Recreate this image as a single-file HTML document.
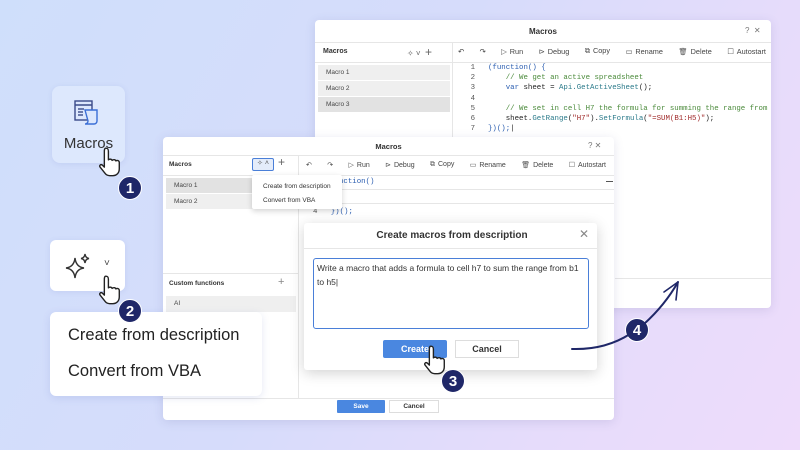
<!DOCTYPE html>
<html><head><meta charset="utf-8"><style>
*{box-sizing:border-box;margin:0;padding:0}
body{width:800px;height:450px;overflow:hidden;position:relative;font-family:"Liberation Sans",sans-serif;background:linear-gradient(120deg,#cfdffb 0%,#d6dcfb 45%,#e6dcfb 75%,#eedcfb 100%);color:#333}
.abs{position:absolute}
.win{position:absolute;background:#fff;border-radius:4px;box-shadow:0 2px 10px rgba(80,80,140,.15);overflow:hidden}
.t{font-size:8px;color:#333}
.b{font-weight:bold}
.mono{font-family:"Liberation Mono",monospace;font-size:7.4px}
.row{position:absolute;background:#ebebeb;font-size:6.5px;color:#444;padding-left:8px}
.badge{position:absolute;width:24px;height:24px;border-radius:50%;background:#1f2768;color:#fff;font-weight:bold;font-size:15px;text-align:center;line-height:24px;border:1.5px solid #fff}
.hl{position:absolute;height:1px;background:#e6e6e6}
.vl{position:absolute;width:1px;background:#e6e6e6}
.kw{color:#2a5db0}.cm{color:#4a8a3a}.fn{color:#2a7a8a}.st{color:#a02a2a}
.tb{position:absolute;display:flex;justify-content:space-between;align-items:center;color:#444;white-space:nowrap}
.tb span .i{color:#555;margin-right:3px}
</style></head><body>

<!-- back window -->
<div class="win" style="left:315px;top:20px;width:456px;height:288px">
 <div class="abs t b" style="left:0;width:456px;top:7px;text-align:center">Macros</div>
 <div class="abs t" style="left:430px;top:6px;color:#777">?&nbsp;&nbsp;✕</div>
 <div class="hl" style="left:0;top:22px;width:456px"></div>
 <div class="abs t b" style="left:8px;top:28px;font-size:7px">Macros</div>
 <div class="abs t" style="left:92px;top:25px;color:#666">✧ ˅&nbsp;&nbsp;<span style="font-size:12px">+</span></div>
 <div class="vl" style="left:137px;top:22px;height:266px"></div>
 <div class="tb" style="left:143px;top:24px;width:308px;height:14px;font-size:7.3px"><span>↶</span><span>↷</span><span><span class="i">▷</span>Run</span><span><span class="i">⊳</span>Debug</span><span><span class="i">⧉</span>Copy</span><span><span class="i">▭</span>Rename</span><span><span class="i">🗑</span>Delete</span><span><span class="i">☐</span>Autostart</span></div>
 <div class="hl" style="left:0;top:42px;width:456px"></div>
 <div class="row" style="left:3px;top:45px;width:132px;height:15px;line-height:15px;background:#efefef">Macro 1</div>
 <div class="row" style="left:3px;top:61px;width:132px;height:15px;line-height:15px;background:#efefef">Macro 2</div>
 <div class="row" style="left:3px;top:77px;width:132px;height:15px;line-height:15px;background:#e2e2e2">Macro 3</div>
 <div class="abs mono" style="left:150px;top:43px;line-height:10.2px;color:#555;text-align:right;width:10px">1<br>2<br>3<br>4<br>5<br>6<br>7</div>
 <div class="abs mono" style="left:173px;top:43px;line-height:10.2px;white-space:pre;color:#222"><span class="kw">(function() {</span>
    <span class="cm">// We get an active spreadsheet</span>
    <span class="kw">var</span> sheet = <span class="fn">Api.GetActiveSheet</span>();

    <span class="cm">// We set in cell H7 the formula for summing the range from B1 to</span>
    sheet.<span class="fn">GetRange</span>(<span class="st">"H7"</span>).<span class="fn">SetFormula</span>(<span class="st">"=SUM(B1:H5)"</span>);
<span class="kw">})();</span>|</div>
 <div class="hl" style="left:300px;top:258px;width:156px"></div>
</div>

<!-- macros tile -->
<div class="abs" style="left:52px;top:86px;width:73px;height:77px;background:#dde8fd;border-radius:8px;box-shadow:0 1px 6px rgba(80,100,180,.12)"></div>
<svg class="abs" style="left:73px;top:98px" width="28" height="28" viewBox="0 0 28 28" fill="none" stroke="#3a4a8a" stroke-width="1.4"><rect x="2" y="3" width="17" height="19"/><line x1="2" y1="7" x2="19" y2="7"/><line x1="5" y1="11" x2="11" y2="11"/><line x1="5" y1="14" x2="10" y2="14"/><line x1="5" y1="17" x2="10" y2="17"/><path d="M12 12h12v11a3 3 0 0 1-3 3h-9a3 3 0 0 0 3-3z" fill="#dde8fd" stroke="#3b6fd6"/></svg>
<div class="abs" style="left:52px;top:135px;width:73px;text-align:center;font-size:15px;color:#333">Macros</div>

<!-- sparkle tile -->
<div class="abs" style="left:50px;top:240px;width:75px;height:51px;background:#fff;border-radius:6px;box-shadow:0 1px 6px rgba(80,100,180,.12)"></div>
<svg class="abs" style="left:63px;top:252px" width="30" height="28" viewBox="0 0 30 28" fill="none" stroke="#333" stroke-width="1.4"><path d="M12 6 Q13 15 21 16 Q13 17 12 26 Q11 17 3 16 Q11 15 12 6z"/><path d="M22 2 Q22.5 6 26 6.5 Q22.5 7 22 11 Q21.5 7 18 6.5 Q21.5 6 22 2z"/></svg>
<div class="abs" style="left:104px;top:258px;font-size:10px;color:#444">˅</div>

<!-- front window -->
<div class="win" style="left:163px;top:137px;width:451px;height:283px">
 <div class="abs t b" style="left:0;width:451px;top:5px;text-align:center;font-size:7.5px">Macros</div>
 <div class="abs t" style="left:425px;top:4px;color:#777">?&nbsp;✕</div>
 <div class="hl" style="left:0;top:18px;width:451px"></div>
 <div class="abs t b" style="left:6px;top:24px;font-size:6.5px">Macros</div>
 <div class="abs" style="left:89px;top:21px;width:22px;height:13px;border:1.5px solid #4a7fd8;border-radius:2px;background:#e4ecfa;font-size:7px;color:#555;text-align:center;line-height:10px">✧ ˄</div>
 <div class="abs" style="left:115px;top:18px;font-size:12px;color:#666">+</div>
 <div class="vl" style="left:135px;top:18px;height:243px"></div>
 <div class="tb" style="left:143px;top:21px;width:300px;height:14px;font-size:7px"><span>↶</span><span>↷</span><span><span class="i">▷</span>Run</span><span><span class="i">⊳</span>Debug</span><span><span class="i">⧉</span>Copy</span><span><span class="i">▭</span>Rename</span><span><span class="i">🗑</span>Delete</span><span><span class="i">☐</span>Autostart</span></div>
 <div class="hl" style="left:0;top:38px;width:451px"></div>
 <div class="row" style="left:3px;top:41px;width:130px;height:15px;line-height:15px;background:#e2e2e2">Macro 1</div>
 <div class="row" style="left:3px;top:57px;width:130px;height:15px;line-height:15px;background:#efefef">Macro 2</div>
 <div class="abs mono kw" style="left:176px;top:41px">nction()</div>
 <div class="hl" style="left:136px;top:52px;width:315px"></div>
 <div class="hl" style="left:136px;top:66px;width:315px"></div>
 <div class="abs" style="left:443px;top:44px;width:7px;height:1px;background:#555"></div>
 <div class="abs mono" style="left:150px;top:71px;color:#555">4&nbsp;&nbsp;&nbsp;<span class="kw">})();</span></div>
 <div class="hl" style="left:0;top:136px;width:135px"></div>
 <div class="abs t b" style="left:6px;top:143px;font-size:6.5px">Custom functions</div>
 <div class="abs" style="left:115px;top:139px;font-size:11px;color:#888">+</div>
 <div class="row" style="left:3px;top:159px;width:130px;height:16px;line-height:16px;background:#efefef">AI</div>
 <div class="hl" style="left:0;top:261px;width:451px"></div>
 <div class="abs" style="left:174px;top:263px;width:48px;height:13px;background:#4a87e0;color:#fff;font-size:6.5px;font-weight:bold;text-align:center;line-height:13px;border-radius:1px">Save</div>
 <div class="abs" style="left:226px;top:263px;width:50px;height:13px;border:1px solid #ddd;font-size:6.5px;font-weight:bold;text-align:center;line-height:11px;color:#333">Cancel</div>
 <!-- small dropdown -->
 <div class="abs" style="left:89px;top:38px;width:90px;height:34px;background:#fff;box-shadow:0 2px 6px rgba(0,0,0,.18);border-radius:2px;font-size:6.5px;color:#333;padding:5px 0 0 11px;line-height:14px">Create from description<br>Convert from VBA</div>
</div>

<!-- dialog -->
<div class="abs" style="left:304px;top:223px;width:293px;height:147px;background:#fff;border-radius:3px;box-shadow:0 3px 14px rgba(0,0,0,.18)">
 <div class="abs b" style="left:0;width:296px;top:7px;text-align:center;font-size:10px;color:#333">Create macros from description</div>
 <div class="abs" style="left:275px;top:4px;font-size:12px;color:#888">✕</div>
 <div class="hl" style="left:0;top:25px;width:293px"></div>
 <div class="abs" style="left:9px;top:35px;width:276px;height:71px;border:1.5px solid #4a7fd8;border-radius:3px;font-size:8.5px;color:#333;padding:2px 3px;line-height:14px">Write a macro that adds a formula to cell h7 to sum the range from b1 to h5|</div>
 <div class="abs" style="left:79px;top:117px;width:64px;height:18px;background:#4a87e0;color:#fff;font-weight:bold;font-size:9px;text-align:center;line-height:18px;border-radius:2px">Create</div>
 <div class="abs" style="left:151px;top:117px;width:64px;height:18px;border:1px solid #ddd;font-weight:bold;font-size:9px;text-align:center;line-height:16px;color:#333">Cancel</div>
</div>

<!-- big dropdown -->
<div class="abs" style="left:50px;top:312px;width:212px;height:84px;background:#fff;border-radius:6px;box-shadow:0 2px 8px rgba(80,100,180,.15);font-size:16.5px;color:#222;padding:5px 0 0 18px;line-height:36px">Create from description<br>Convert from VBA</div>

<!-- hands -->
<svg width="0" height="0" style="position:absolute"><defs><path id="hand" d="M6 2c2 0 2.5 1 2.5 3v8c1-1 3-1 3.5 .5 1-1 3-1 3.5.5 1-.8 3-.5 3.2 1.3v6c0 4-2.5 6.5-6 6.5h-3c-2.5 0-3.5-1-5-3l-4-5c-1-1.5.5-3 2-2l2 2V5c0-2 .5-3 1.3-3z" fill="#fff" stroke="#222" stroke-width="1.3" stroke-linejoin="round"/></defs></svg>
<svg class="abs" style="left:98px;top:146px" width="24" height="32" viewBox="-1 0 22 30"><use href="#hand"/></svg>
<svg class="abs" style="left:98px;top:274px" width="24" height="32" viewBox="-1 0 22 30"><use href="#hand"/></svg>
<svg class="abs" style="left:423px;top:344px" width="24" height="32" viewBox="-1 0 22 30"><use href="#hand"/></svg>

<div class="badge" style="left:118px;top:176px">1</div>
<div class="badge" style="left:118px;top:299px">2</div>
<div class="badge" style="left:441px;top:369px">3</div>
<div class="badge" style="left:625px;top:318px">4</div>

<svg class="abs" style="left:560px;top:270px" width="140" height="90" viewBox="0 0 140 90" fill="none" stroke="#1f2768" stroke-width="2" stroke-linecap="round"><path d="M12 79 Q45 80 70 64"/><path d="M84 54 Q105 35 118 12"/><path d="M118 12 L104 22 M118 12 L116 30" stroke-width="1.6"/></svg>
</body></html>
